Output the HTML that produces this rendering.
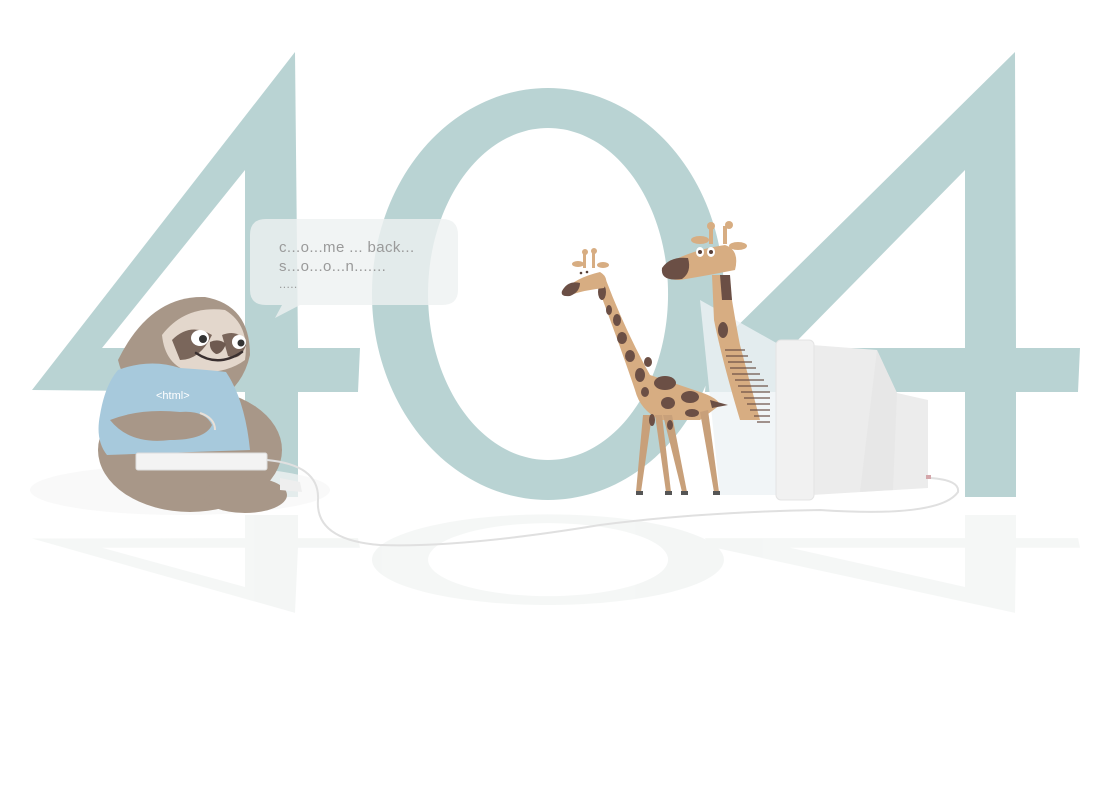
<!DOCTYPE html>
<html><head><meta charset="utf-8"><style>
html,body{margin:0;padding:0;background:#fff;}
svg{display:block}
</style></head><body>
<svg width="1106" height="808" viewBox="0 0 1106 808" xmlns="http://www.w3.org/2000/svg">
<defs>
<g id="n404">
<path fill-rule="evenodd" d="M295,52 L298,348 L360,348 L358,392 L298,392 L298,497 L245,497 L245,392 L32,390 Z M245,170 L245,348 L102,348 Z"/>
<path fill-rule="evenodd" d="M548,88 A176,206 0 1 1 547.9,88 Z M548,128 A120,166 0 1 0 548.1,128 Z"/>
<path fill-rule="evenodd" d="M1015,52 L1016,348 L1080,348 L1078,392 L1016,392 L1016,497 L965,497 L965,392 L705,392 L708,355 Z M965,170 L965,348 L790,348 Z"/>
</g>
</defs>
<!-- reflection -->
<g fill="#eef1f0" opacity="0.6" transform="translate(0,515) scale(1,-0.22) translate(0,-497)">
<use href="#n404"/>
</g>
<g fill="#b9d3d3"><use href="#n404"/></g>
<ellipse cx="180" cy="490" rx="150" ry="25" fill="#f6f7f7" opacity="0.7"/>

<!-- speech bubble -->
<path d="M266,219 H442 Q458,219 458,235 V290 Q458,305 442,305 H300 L275,318 L282,305 H266 Q250,305 250,290 V235 Q250,219 266,219 Z" fill="#eef1f1" opacity="0.8"/>
<g font-family="Liberation Sans, sans-serif" font-size="15" fill="#9a9a9a" letter-spacing="0.4">
<text x="279" y="252">c...o...me ...  back...</text>
<text x="279" y="271">s...o...o...n.......</text>
<text x="279" y="288" font-size="12">.....</text>
</g>

<!-- sloth -->
<g>
<ellipse cx="190" cy="450" rx="92" ry="62" fill="#a89788"/>
<ellipse cx="245" cy="495" rx="42" ry="18" fill="#a89788"/>
<path d="M118,360 Q150,295 205,297 Q250,305 250,355 Q240,400 190,410 Q130,410 118,360 Z" fill="#a89788"/>
<path d="M162,335 Q185,305 225,310 Q250,325 245,360 Q225,375 190,372 Q165,365 162,335 Z" fill="#e3d7cc"/>
<path d="M172,340 Q190,322 212,335 Q200,360 180,360 Z" fill="#7a665b"/>
<path d="M222,335 Q240,328 246,345 Q240,362 228,356 Z" fill="#7a665b"/>
<ellipse cx="200" cy="338" rx="9" ry="8" fill="#fff"/><circle cx="203" cy="339" r="4" fill="#333"/>
<ellipse cx="239" cy="342" rx="7" ry="7" fill="#fff"/><circle cx="241" cy="343" r="3.5" fill="#333"/>
<path d="M210,342 Q219,338 226,344 Q222,354 216,354 Q209,350 210,342 Z" fill="#6e5a50"/>
<path d="M196,353 Q218,368 242,352" stroke="#3a3030" stroke-width="2.5" fill="none" stroke-linecap="round"/>
<path d="M118,370 Q150,358 180,368 Q210,370 226,372 Q245,400 250,450 L107,455 Q95,440 100,415 Q105,385 118,370 Z" fill="#a7c9dc"/>
<text x="156" y="399" font-family="Liberation Sans, sans-serif" font-size="11" fill="#fff">&lt;html&gt;</text>
<path d="M110,420 Q140,408 180,412 Q205,410 212,425 Q205,440 170,440 Q130,445 110,420 Z" fill="#a89788"/>
<path d="M200,413 Q215,418 215,430" stroke="#e8e0d8" stroke-width="2" fill="none"/>
<rect x="136" y="453" width="131" height="17" rx="2" fill="#f3f3f3" stroke="#dcdcdc"/>
<path d="M280,478 L300,482 L302,492 L280,490 Z" fill="#eeeeee"/>
</g>
<path d="M267,460 Q320,465 318,500 Q315,540 380,545 Q460,548 600,525 Q700,512 820,510 Q940,518 958,492 Q960,480 930,478" stroke="#e0e0e0" stroke-width="2" fill="none"/>

<path d="M700,300 L780,345 L780,495 L720,495 Z" fill="#eef3f5" opacity="0.8"/>
<!-- big giraffe -->
<g>
<path d="M712,275 L728,275 Q735,320 740,345 L760,420 L740,420 Q722,360 714,320 Z" fill="#d7ad82"/>
<path d="M720,275 L730,275 L732,300 L722,300 Z" fill="#6b4f45"/>
<ellipse cx="723" cy="330" rx="5" ry="8" fill="#6b4f45"/>
<g stroke="#6b4f45" stroke-width="1.5" opacity="0.8">
<line x1="725" y1="350" x2="745" y2="350"/><line x1="726" y1="356" x2="748" y2="356"/><line x1="728" y1="362" x2="752" y2="362"/><line x1="730" y1="368" x2="756" y2="368"/><line x1="732" y1="374" x2="760" y2="374"/><line x1="735" y1="380" x2="764" y2="380"/><line x1="738" y1="386" x2="768" y2="386"/><line x1="741" y1="392" x2="770" y2="392"/><line x1="744" y1="398" x2="770" y2="398"/><line x1="747" y1="404" x2="770" y2="404"/><line x1="750" y1="410" x2="770" y2="410"/><line x1="754" y1="416" x2="770" y2="416"/><line x1="757" y1="422" x2="770" y2="422"/>
</g>
<path d="M665,265 Q690,250 725,245 Q740,250 735,270 Q710,275 680,280 Q658,280 665,265 Z" fill="#d7ad82"/>
<path d="M662,268 Q670,256 688,258 Q692,272 682,279 Q660,282 662,268 Z" fill="#6b4f45"/>
<rect x="709" y="226" width="4" height="18" fill="#d7ad82"/><rect x="723" y="226" width="4" height="18" fill="#d7ad82"/>
<circle cx="711" cy="226" r="4" fill="#d7ad82"/><circle cx="729" cy="225" r="4" fill="#d7ad82"/>
<ellipse cx="700" cy="240" rx="9" ry="4" fill="#d7ad82"/><ellipse cx="738" cy="246" rx="9" ry="4" fill="#d7ad82"/>
<ellipse cx="700" cy="252" rx="4" ry="5" fill="#fff"/><circle cx="700" cy="252" r="2" fill="#5a4038"/>
<ellipse cx="711" cy="252" rx="4" ry="5" fill="#fff"/><circle cx="711" cy="252" r="2" fill="#5a4038"/>
</g>
<!-- small giraffe -->
<g>
<path d="M596,282 L606,280 Q625,330 650,375 L700,392 Q718,398 720,405 L700,420 L660,420 Q640,410 635,390 Q618,340 596,282 Z" fill="#d7ad82"/>
<g fill="#c8a07a">
<path d="M643,415 L636,492 L641,492 L652,415 Z"/><path d="M655,415 L666,492 L671,492 L662,415 Z"/>
<path d="M663,415 L682,492 L687,492 L672,415 Z"/><path d="M700,412 L714,492 L719,492 L708,410 Z"/>
</g>
<g fill="#555"><rect x="636" y="491" width="7" height="4"/><rect x="665" y="491" width="7" height="4"/><rect x="681" y="491" width="7" height="4"/><rect x="713" y="491" width="7" height="4"/></g>
<g fill="#6b4f45">
<ellipse cx="602" cy="292" rx="4" ry="8"/><ellipse cx="609" cy="310" rx="3" ry="5"/><ellipse cx="617" cy="320" rx="4" ry="6"/><ellipse cx="622" cy="338" rx="5" ry="6"/><ellipse cx="630" cy="356" rx="5" ry="6"/><ellipse cx="648" cy="362" rx="4" ry="5"/><ellipse cx="640" cy="375" rx="5" ry="7"/><ellipse cx="665" cy="383" rx="11" ry="7"/><ellipse cx="690" cy="397" rx="9" ry="6"/><ellipse cx="668" cy="403" rx="7" ry="6"/><ellipse cx="645" cy="392" rx="4" ry="5"/><ellipse cx="692" cy="413" rx="7" ry="4"/><ellipse cx="652" cy="420" rx="3" ry="6"/><ellipse cx="670" cy="425" rx="3" ry="5"/>
<path d="M710,400 L728,405 L712,408 Z"/>
</g>
<path d="M565,290 Q575,278 600,272 Q610,278 604,288 Q585,290 570,295 Q560,296 565,290 Z" fill="#d7ad82"/>
<path d="M562,291 Q568,280 580,283 Q580,292 570,296 Q560,297 562,291 Z" fill="#6b4f45"/>
<rect x="583" y="252" width="3" height="16" fill="#d7ad82"/><rect x="592" y="252" width="3" height="16" fill="#d7ad82"/>
<circle cx="585" cy="252" r="3" fill="#d7ad82"/><circle cx="594" cy="251" r="3" fill="#d7ad82"/>
<ellipse cx="578" cy="264" rx="6" ry="3" fill="#d7ad82"/><ellipse cx="603" cy="265" rx="6" ry="3" fill="#d7ad82"/>
<circle cx="580" cy="273" r="3" fill="#fff"/><circle cx="581" cy="273" r="1.3" fill="#5a4038"/>
<circle cx="586" cy="272" r="3" fill="#fff"/><circle cx="587" cy="272" r="1.3" fill="#5a4038"/>
</g>

<!-- monitor -->
<g>
<path d="M812,345 L877,350 L897,393 L928,400 L928,488 L812,495 Z" fill="#ececec"/>
<path d="M877,350 L897,393 L893,490 L860,492 Z" fill="#e5e5e5" opacity="0.7"/>
<rect x="776" y="340" width="38" height="160" rx="5" fill="#f1f1f1" stroke="#e4e4e4"/>
<rect x="926" y="475" width="5" height="4" fill="#d4a6aa"/>
</g>
</svg>
</body></html>
